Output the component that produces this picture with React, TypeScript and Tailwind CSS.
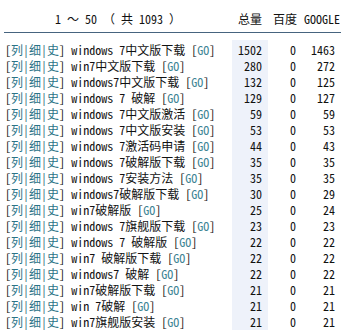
import React from "react";

const rows: [string, number, number, number][] = [
  ["windows 7中文版下载", 1502, 0, 1463],
  ["win7中文版下载", 280, 0, 272],
  ["windows7中文版下载", 132, 0, 125],
  ["windows 7 破解", 129, 0, 127],
  ["windows 7中文版激活", 59, 0, 59],
  ["windows 7中文版安装", 53, 0, 53],
  ["windows 7激活码申请", 44, 0, 43],
  ["windows 7破解版下载", 35, 0, 35],
  ["windows 7安装方法", 35, 0, 35],
  ["windows7破解版下载", 30, 0, 29],
  ["win7破解版", 25, 0, 24],
  ["windows 7旗舰版下载", 23, 0, 23],
  ["windows 7 破解版", 22, 0, 22],
  ["win7 破解版下载", 22, 0, 22],
  ["windows7 破解", 22, 0, 22],
  ["win7破解版下载", 21, 0, 21],
  ["win 7破解", 21, 0, 21],
  ["win7旗舰版安装", 21, 0, 21],
];

export default function App() {
  return (
    <div
      className="w-[343px] h-[330px] bg-white overflow-hidden pl-[4px] pr-[2px] text-[12px] leading-[16px] text-[#111]"
      style={{ fontFamily: '"Noto Sans Mono CJK SC", "Liberation Mono", "Noto Sans CJK SC", monospace' }}
    >
      <div className="grid grid-cols-[228px_36px_32px_41px] h-[33px] pt-[11px] border-b border-[#46647f]">
        <div className="text-center whitespace-pre">1 ～ 50 （ 共 1093 ）</div>
        <div className="text-right pr-[6px]">总量</div>
        <div className="text-right pr-[3px]">百度</div>
        <div className="text-right pr-[1px]">GOOGLE</div>
      </div>
      <div className="mt-[7px] grid grid-cols-[228px_36px_32px_41px]">
        <div className="h-[2px]" />
        <div className="h-[2px] bg-[#eef2fa]" />
        <div />
        <div />
        {rows.map(([kw, total, baidu, google], i) => (
          <React.Fragment key={i}>
            <div className="h-[16px] whitespace-pre overflow-hidden pl-[1px]">
              <span>[</span>
              <span className="text-[#2b7387]">列</span>
              <span className="text-[#2b5f73]">|</span>
              <span className="text-[#2b7387]">细</span>
              <span className="text-[#2b5f73]">|</span>
              <span className="text-[#2b7387]">史</span>
              <span>]</span>
              <span> {kw} </span>
              <span>[</span>
              <span className="text-[#3d8494]">GO</span>
              <span>]</span>
            </div>
            <div className="h-[16px] bg-[#eef2fa] text-right pr-[6px]">{total}</div>
            <div className="h-[16px] text-right pr-[4px]">{baidu}</div>
            <div className="h-[16px] text-right pr-[6px]">{google}</div>
          </React.Fragment>
        ))}
      </div>
    </div>
  );
}
